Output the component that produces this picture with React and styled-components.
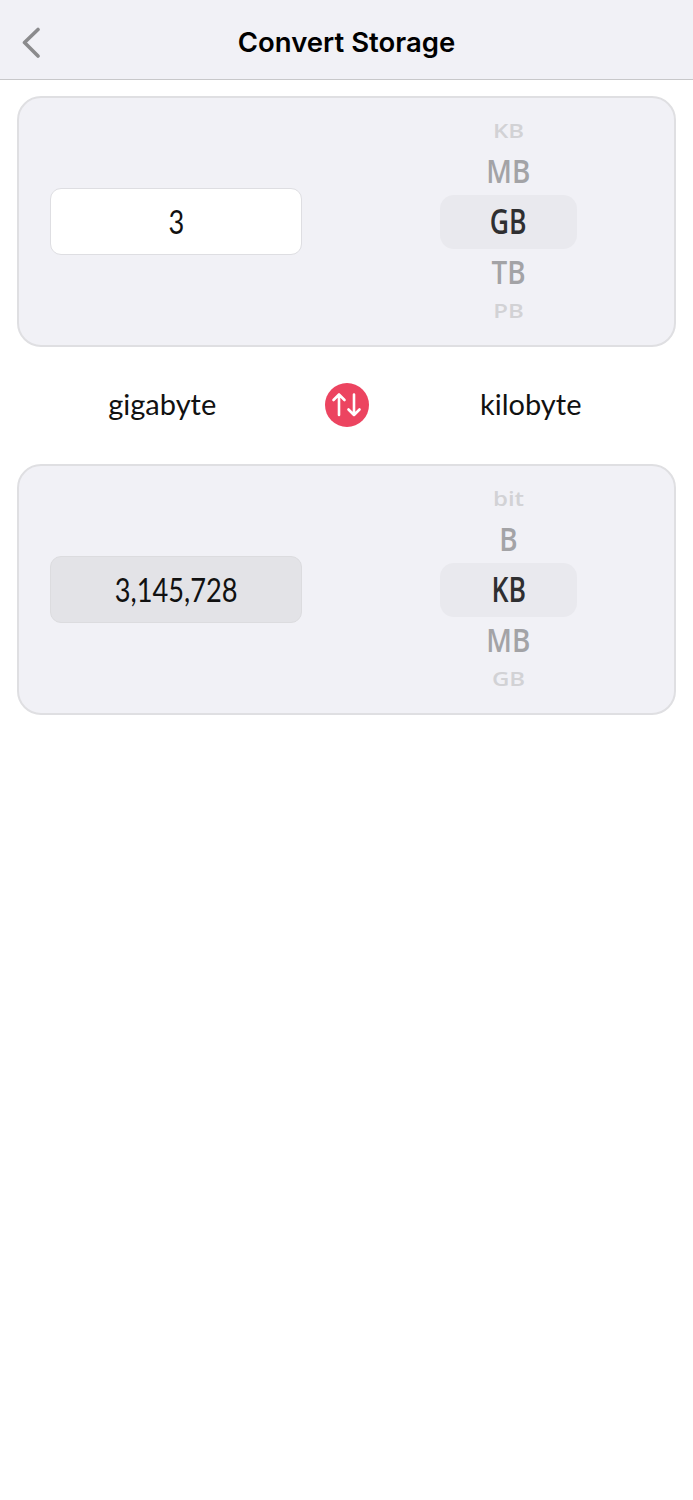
import React from "react";
import styled, { createGlobalStyle } from "styled-components";

const GlobalStyle = createGlobalStyle`
  html, body {
    margin: 0;
    padding: 0;
    background: #fff;
  }
  * {
    box-sizing: border-box;
  }
`;

// wheel rows get squeezed towards the top and bottom edge
const LEVELS = {
  0: { height: 54, size: 35, scaleX: 0.76, scaleY: 1, color: "#2f2f31", weight: 600 },
  1: { height: 47, size: 32, scaleX: 0.87, scaleY: 1, color: "#a3a3a6", weight: 600 },
  2: { height: 32, size: 24, scaleX: 1, scaleY: 0.84, color: "#d2d2d5", weight: 600 },
};

const App = () => {
  return (
    <Page>
      <GlobalStyle />
      <Header>
        <BackButton aria-label="Back">
          <svg width="19" height="32" viewBox="0 0 19 32" fill="none">
            <path
              d="M16 2.5 L2.5 15.5 L16 29"
              stroke="#8b8b8d"
              strokeWidth="3.6"
              strokeLinecap="round"
              strokeLinejoin="round"
            />
          </svg>
        </BackButton>
        <Title>Convert Storage</Title>
      </Header>
      <Content>
        <ConvertCard value="3" units={["KB", "MB", "GB", "TB", "PB"]} />
        <SwapRow>
          <UnitLabel>gigabyte</UnitLabel>
          <SwapButton aria-label="Swap">
            <svg width="44" height="44" viewBox="0 0 44 44" fill="none">
              <path
                d="M14 32 V11.5 M8.5 17 L14 11.5 L19.5 17 M29 11.5 V32 M23.5 26.5 L29 32 L34.5 26.5"
                stroke="#fff"
                strokeWidth="2.6"
                strokeLinecap="round"
                strokeLinejoin="round"
              />
            </svg>
          </SwapButton>
          <UnitLabel>kilobyte</UnitLabel>
        </SwapRow>
        <ConvertCard readOnly value="3,145,728" units={["bit", "B", "KB", "MB", "GB"]} />
      </Content>
    </Page>
  );
};

const ConvertCard = ({ value, units, readOnly }) => {
  return (
    <Card>
      <ValueBox $readOnly={readOnly}>
        <span>{value}</span>
      </ValueBox>
      <Wheel>
        {units.map((unit, i) => {
          const level = Math.abs(i - 2);
          return (
            <WheelItem key={unit} $level={level}>
              <span>{unit}</span>
            </WheelItem>
          );
        })}
      </Wheel>
    </Card>
  );
};

export default App;

const Page = styled.div`
  min-height: 1500px;
  background: #fff;
  font-family: "Lato", "Open Sans", sans-serif;
`;
const Header = styled.header`
  position: relative;
  display: flex;
  align-items: center;
  justify-content: center;
  height: 80px;
  padding-top: 4px;
  background: #f1f1f6;
  border-bottom: 1px solid #c8c8ca;
`;
const BackButton = styled.div`
  position: absolute;
  left: 22px;
  top: 27px;
  display: flex;
`;
const Title = styled.h1`
  margin: 0;
  font-family: "Inter", "Liberation Sans", sans-serif;
  font-size: 27.5px;
  font-weight: 600;
  color: #000;
`;
const Content = styled.main`
  padding: 16px 17px 0;
`;
const Card = styled.section`
  display: flex;
  align-items: center;
  gap: 138px;
  height: 251px;
  padding: 0 31px;
  background: #f1f1f6;
  border: 2px solid #dfdfe2;
  border-radius: 24px;
`;
const ValueBox = styled.div`
  display: flex;
  align-items: center;
  justify-content: center;
  width: 252px;
  height: 67px;
  font-size: 32px;
  font-weight: 400;
  color: #111;
  background: ${({ $readOnly }) => ($readOnly ? "#e3e3e7" : "#fff")};
  border: 1.5px solid ${({ $readOnly }) => ($readOnly ? "#dcdcdf" : "#dedee2")};
  border-radius: 11px;

  span {
    display: block;
    transform: scaleX(0.85);
  }
`;
const Wheel = styled.div`
  display: flex;
  flex-direction: column;
  width: 137px;
  font-family: "Open Sans", sans-serif;
`;
const WheelItem = styled.div`
  display: flex;
  align-items: center;
  justify-content: center;
  height: ${({ $level }) => LEVELS[$level].height}px;
  padding-bottom: 2px;
  font-size: ${({ $level }) => LEVELS[$level].size}px;
  font-weight: ${({ $level }) => LEVELS[$level].weight};
  color: ${({ $level }) => LEVELS[$level].color};
  background: ${({ $level }) => ($level === 0 ? "#e9e9ee" : "transparent")};
  border-radius: 14px;

  span {
    display: block;
    transform: scale(${({ $level }) => LEVELS[$level].scaleX}, ${({ $level }) => LEVELS[$level].scaleY});
  }
`;
const SwapRow = styled.div`
  display: grid;
  grid-template-columns: 1fr 44px 1fr;
  align-items: center;
  height: 117px;
  margin: 0 -17px;
`;
const UnitLabel = styled.div`
  padding-bottom: 4px;
  text-align: center;
  font-size: 29px;
  color: #111;
`;
const SwapButton = styled.div`
  display: flex;
  width: 44px;
  height: 44px;
  margin-top: -1px;
  background: #ec4460;
  border-radius: 50%;
`;
